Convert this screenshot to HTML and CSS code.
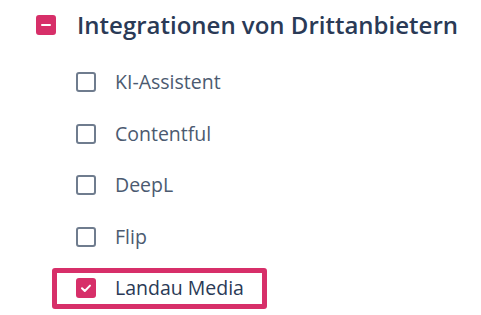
FILE: index.html
```html
<!DOCTYPE html>
<html lang="de">
<head>
<meta charset="utf-8">
<link rel="stylesheet" href="styles.css">
</head>
<body>
<div class="group">
  <div class="group-head">
    <span class="box box--indeterminate"><span class="dash"></span></span>
    <span class="group-title">Integrationen von Drittanbietern</span>
  </div>
  <ul class="options">
    <li class="option"><span class="box"></span><span class="label">KI-Assistent</span></li>
    <li class="option"><span class="box"></span><span class="label">Contentful</span></li>
    <li class="option"><span class="box"></span><span class="label">DeepL</span></li>
    <li class="option"><span class="box"></span><span class="label">Flip</span></li>
    <li class="option option--focus"><span class="box box--checked"><svg viewBox="0 0 20 20" width="20" height="20"><path d="M6 10.2 L8.8 13 L14 7.6" fill="none" stroke="#fff" stroke-width="2" stroke-linecap="round" stroke-linejoin="round"/></svg></span><span class="label">Landau Media</span></li>
  </ul>
</div>
</body>
</html>
```
FILE: styles.css
```css
* { box-sizing: border-box; }
html, body { margin: 0; padding: 0; background: #fff; }
body { font-family: "Open Sans", "Noto Sans", sans-serif; }

.group { padding: 15px 0 0 36px; }

.group-head {
  display: flex;
  align-items: center;
  gap: 21px;
  height: 20px;
}
.group-title {
  font-size: 24px;
  font-weight: 600;
  color: #2a3a56;
  line-height: 20px;
}

.box {
  width: 20px;
  height: 20px;
  flex: 0 0 20px;
  border: 2px solid #6f7c8e;
  border-radius: 3px;
  display: flex;
  align-items: center;
  justify-content: center;
}
.box--indeterminate {
  background: #d72f69;
  border-color: #d72f69;
}
.dash {
  width: 10px;
  height: 2px;
  background: #fff;
  border-radius: 1px;
}
.box--checked {
  background: #d72f69;
  border: none;
}

.options {
  list-style: none;
  margin: 37px 0 0 40px;
  padding: 0;
  display: flex;
  flex-direction: column;
  gap: 31.5px;
}
.option {
  display: flex;
  align-items: center;
  gap: 19px;
  height: 20px;
}
.label {
  font-size: 19.5px;
  color: #4b5a70;
  line-height: 20px;
}
.option--focus {
  align-self: flex-start;
  height: 41px;
  margin: -10.5px 0 0 -24px;
  padding: 0 18px 0 19px;
  border: 5px solid #d72f69;
  border-radius: 3px;
}
.option--focus .label { color: #2a3a56; }
```
